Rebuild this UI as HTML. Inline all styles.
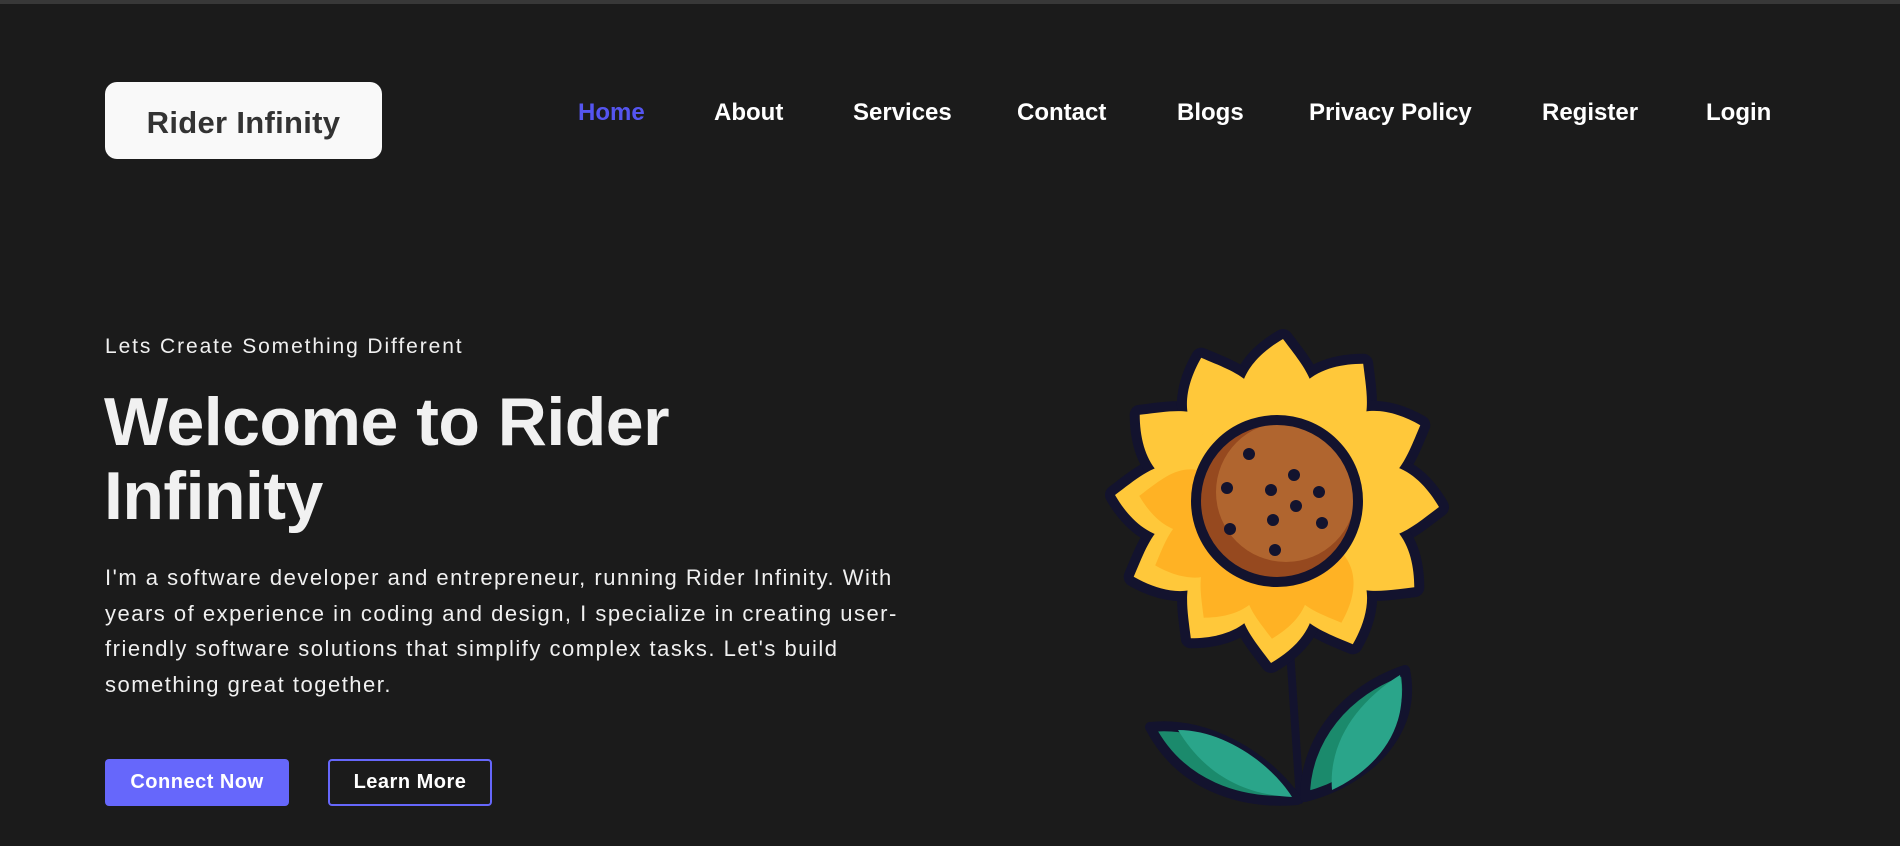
<!DOCTYPE html>
<html><head><meta charset="utf-8"><style>
*{margin:0;padding:0;box-sizing:border-box}
html,body{width:1900px;height:846px;overflow:hidden;background:#1b1b1b;font-family:"Liberation Sans",sans-serif}
.top{position:absolute;left:0;top:0;width:1900px;height:4px;background:#383838}
.logo{position:absolute;left:105px;top:82px;width:277px;height:77px;background:#f9f9f9;border-radius:12px;color:#333;font-weight:bold;font-size:31px;display:flex;align-items:center;justify-content:center;padding-top:4px;letter-spacing:.3px}
.nav a{position:absolute;top:99px;font-size:24px;font-weight:bold;color:#fff;text-decoration:none;white-space:nowrap;line-height:28px}
.sub{position:absolute;left:105px;top:335px;font-size:21px;color:#f0f0f0;letter-spacing:1.9px;white-space:nowrap}
h1{position:absolute;left:104px;top:385px;font-size:68px;line-height:74px;color:#f1f1f1;font-weight:bold;letter-spacing:-.5px}
p{position:absolute;left:105px;top:560px;font-size:22px;line-height:35.5px;color:#f0f0f0;white-space:nowrap;letter-spacing:1.5px}
.b1{position:absolute;left:105px;top:759px;width:184px;height:47px;background:#6667fb;border-radius:4px;color:#fff;font-weight:bold;font-size:20px;display:flex;align-items:center;justify-content:center;letter-spacing:.5px}
.b2{position:absolute;left:328px;top:759px;width:164px;height:47px;border:2px solid #6667fb;border-radius:4px;color:#fff;font-weight:bold;font-size:20px;display:flex;align-items:center;justify-content:center;letter-spacing:.5px}
svg{position:absolute;left:0;top:0}
</style></head><body>
<div class="top"></div>
<div class="logo">Rider Infinity</div>
<div class="nav">
<a style="left:578px;color:#5555f0">Home</a>
<a style="left:714px">About</a>
<a style="left:853px">Services</a>
<a style="left:1017px">Contact</a>
<a style="left:1177px">Blogs</a>
<a style="left:1309px">Privacy Policy</a>
<a style="left:1542px">Register</a>
<a style="left:1706px">Login</a>
</div>
<div class="sub">Lets Create Something Different</div>
<h1>Welcome to Rider<br>Infinity</h1>
<p>I'm a software developer and entrepreneur, running Rider Infinity. With<br>years of experience in coding and design, I specialize in creating user-<br>friendly software solutions that simplify complex tasks. Let's build<br>something great together.</p>
<div class="b1">Connect Now</div>
<div class="b2">Learn More</div>
<svg width="1900" height="846" viewBox="0 0 1900 846">
<defs>
<path id="pt" d="M-36 -92 C-42 -125 -18 -148 6 -162 C24 -138 42 -118 36 -92 Z"/>
</defs>
<line x1="1288" y1="620" x2="1300" y2="800" stroke="#13132e" stroke-width="8" stroke-linecap="round"/>
<path d="M1150 727 C1210 720 1270 760 1297 800 C1240 805 1180 785 1150 727 Z" fill="#1b8a6c" stroke="#13132e" stroke-width="10" stroke-linejoin="round"/>
<path d="M1178 730 C1225 730 1272 765 1292 797 C1245 795 1205 775 1178 730 Z" fill="#2aa58a"/>
<path d="M1405 670 C1418 730 1370 780 1305 797 C1305 740 1345 690 1405 670 Z" fill="#1b8a6c" stroke="#13132e" stroke-width="10" stroke-linejoin="round"/>
<path d="M1400 675 C1410 730 1375 770 1332 790 C1328 740 1360 700 1400 675 Z" fill="#2aa58a"/>
<g transform="translate(1277 501)">
<g stroke="#13132e" stroke-width="20" stroke-linejoin="round" fill="#13132e">
<use href="#pt" transform="rotate(0)"/><use href="#pt" transform="rotate(30)"/><use href="#pt" transform="rotate(60)"/><use href="#pt" transform="rotate(90)"/><use href="#pt" transform="rotate(120)"/><use href="#pt" transform="rotate(150)"/><use href="#pt" transform="rotate(180)"/><use href="#pt" transform="rotate(210)"/><use href="#pt" transform="rotate(240)"/><use href="#pt" transform="rotate(270)"/><use href="#pt" transform="rotate(300)"/><use href="#pt" transform="rotate(330)"/>
<circle r="100"/>
</g>
<g fill="#ffc83a">
<use href="#pt" transform="rotate(0)"/><use href="#pt" transform="rotate(30)"/><use href="#pt" transform="rotate(60)"/><use href="#pt" transform="rotate(90)"/><use href="#pt" transform="rotate(120)"/><use href="#pt" transform="rotate(150)"/><use href="#pt" transform="rotate(180)"/><use href="#pt" transform="rotate(210)"/><use href="#pt" transform="rotate(240)"/><use href="#pt" transform="rotate(270)"/><use href="#pt" transform="rotate(300)"/><use href="#pt" transform="rotate(330)"/>
<circle r="100"/>
</g>
<g fill="#ffb224">
<use href="#pt" transform="rotate(180) scale(.85)"/><use href="#pt" transform="rotate(210) scale(.85)"/><use href="#pt" transform="rotate(240) scale(.85)"/><use href="#pt" transform="rotate(270) scale(.85)"/><use href="#pt" transform="rotate(150) scale(.85)"/>
</g>
<circle r="80" fill="#96491f"/>
<circle cx="9" cy="-9" r="70" fill="#b0652f"/>
<circle r="81" fill="none" stroke="#13132e" stroke-width="10"/>
</g>
<g fill="#13132e">
<circle cx="1249" cy="454" r="6"/><circle cx="1294" cy="475" r="6"/><circle cx="1227" cy="488" r="6"/><circle cx="1271" cy="490" r="6"/><circle cx="1319" cy="492" r="6"/><circle cx="1296" cy="506" r="6"/><circle cx="1273" cy="520" r="6"/><circle cx="1322" cy="523" r="6"/><circle cx="1230" cy="529" r="6"/><circle cx="1275" cy="550" r="6"/>
</g>
</svg>
</body></html>
